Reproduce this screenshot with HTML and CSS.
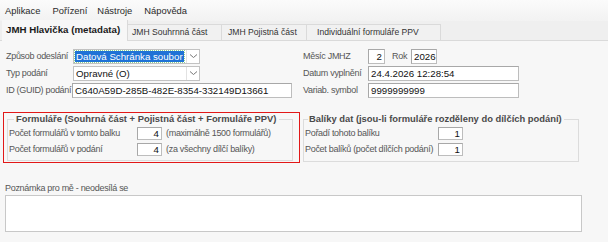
FILE: index.html
```html
<!DOCTYPE html>
<html lang="cs">
<head>
<meta charset="utf-8">
<title>JMH Hlavička</title>
<link rel="stylesheet" href="styles.css">
</head>
<body>
<div class="app">
  <div class="menubar">
    <span class="menu m1">Aplikace</span>
    <span class="menu m2">Pořízení</span>
    <span class="menu m3">Nástroje</span>
    <span class="menu m4">Nápověda</span>
  </div>
  <div class="tabs">
    <div class="tab active t1">JMH Hlavička (metadata)</div>
    <div class="tab t2">JMH Souhrnná část</div>
    <div class="tab t3">JMH Pojistná část</div>
    <div class="tab t4">Individuální formuláře PPV</div>
  </div>
  <div class="content">
    <div class="top">
      <div class="col left">
        <div class="row">
          <span class="lbl lw-left">Způsob odeslání</span>
          <div class="select">
            <span class="sel-text focused">Datová Schránka soubor</span>
            <span class="arrow"><svg width="9" height="6" viewBox="0 0 9 6"><path d="M1 1.5 L4.5 4.5 L8 1.5" fill="none" stroke="#777" stroke-width="1"/></svg></span>
          </div>
        </div>
        <div class="row">
          <span class="lbl lw-left">Typ podání</span>
          <div class="select">
            <span class="sel-text">Opravné (O)</span>
            <span class="arrow"><svg width="9" height="6" viewBox="0 0 9 6"><path d="M1 1.5 L4.5 4.5 L8 1.5" fill="none" stroke="#777" stroke-width="1"/></svg></span>
          </div>
        </div>
        <div class="row">
          <span class="lbl lw-left lw-id">ID (GUID) podání</span>
          <div class="input w-guid">C640A59D-285B-482E-8354-332149D13661</div>
        </div>
      </div>
      <div class="col right">
        <div class="row">
          <span class="lbl lw-right">Měsíc JMHZ</span>
          <div class="input num w-month">2</div>
          <span class="lbl rok">Rok</span>
          <div class="input w-year">2026</div>
        </div>
        <div class="row">
          <span class="lbl lw-right">Datum vyplnění</span>
          <div class="input w-date">24.4.2026 12:28:54</div>
        </div>
        <div class="row">
          <span class="lbl lw-right">Variab. symbol</span>
          <div class="input w-date">9999999999</div>
        </div>
      </div>
    </div>

    <div class="groups">
      <div class="redbox">
        <fieldset class="group g-left">
          <legend>Formuláře (Souhrná část + Pojistná část + Formuláře PPV)</legend>
          <div class="frow">
            <span class="lbl lw-g1">Počet formulářů v tomto balku</span>
            <div class="input small num">4</div>
            <span class="lbl hint">(maximálně 1500 formulářů)</span>
          </div>
          <div class="frow">
            <span class="lbl lw-g1">Počet formulářů v podání</span>
            <div class="input small num">4</div>
            <span class="lbl hint">(za všechny dílčí balíky)</span>
          </div>
        </fieldset>
      </div>
      <fieldset class="group g-right">
        <legend>Balíky dat (jsou-li formuláře rozděleny do dílčích podání)</legend>
        <div class="frow">
          <span class="lbl lw-g2">Pořadí tohoto balíku</span>
          <div class="input small num">1</div>
        </div>
        <div class="frow">
          <span class="lbl lw-g2">Počet balíků (počet dílčích podání)</span>
          <div class="input small num">1</div>
        </div>
      </fieldset>
    </div>

    <div class="note">
      <div class="lbl note-lbl">Poznámka pro mě - neodesílá se</div>
      <div class="textarea"></div>
    </div>
  </div>
</div>
</body>
</html>
```

FILE: styles.css
```css
html, body {
  margin: 0;
  padding: 0;
}
body {
  width: 608px;
  height: 242px;
  overflow: hidden;
  background: #f7f7f7;
  font-family: "Liberation Sans", Arial, sans-serif;
  color: #222;
}
.app {
  display: flex;
  flex-direction: column;
}

/* menu */
.menubar {
  height: 21px;
  display: flex;
  align-items: center;
  background: linear-gradient(#fbfbfb, #f2f2f2);
  font-size: 9.4px;
  color: #2a2a2a;
}
.menu { line-height: 12px; }
.m1 { margin-left: 5px; }
.m2 { margin-left: 12px; }
.m3 { margin-left: 10px; }
.m4 { margin-left: 12px; }

/* tabs */
.tabs {
  height: 20px;
  display: flex;
  align-items: flex-end;
  padding-left: 2px;
  background: #efefef;
  border-bottom: 1px solid #dadada;
  box-sizing: border-box;
}
.tab {
  box-sizing: border-box;
  height: 16px;
  line-height: 15px;
  font-size: 8.6px;
  color: #333;
  background: #f1f1f1;
  border: 1px solid #dadada;
  border-bottom: none;
  border-left: none;
  white-space: nowrap;
}
.tab.active {
  line-height: 19px;
  font-size: 9.7px;
  font-weight: bold;
  color: #1a1a1a;
  background: #f7f7f7;
  border-top: none;
  margin-bottom: -1px;
  height: 21px;
}
.t1 { width: 126px; padding-left: 4px; }
.t2 { width: 94px; padding-left: 4px; }
.t3 { width: 85px; padding-left: 6px; }
.t4 { width: 134px; padding-left: 10px; }

/* top form */
.content {
  display: flex;
  flex-direction: column;
}
.top {
  display: flex;
  padding-top: 7px;
}
.col {
  display: flex;
  flex-direction: column;
  gap: 1px;
}
.left { width: 297px; padding-left: 6px; box-sizing: border-box; }
.right { padding-left: 6px; }
.row {
  height: 16px;
  display: flex;
  align-items: center;
}
.lbl {
  font-size: 9px;
  letter-spacing: -0.3px;
  color: #565656;
  white-space: nowrap;
}
.lw-left { width: 67px; flex: none; }
.lw-id { width: 66px; }
.lw-right { width: 65px; flex: none; }
.rok { margin-left: 7px; width: 19px; }

.select {
  box-sizing: border-box;
  width: 127px;
  height: 15px;
  display: flex;
  align-items: center;
  background: #fff;
  border: 1px solid #c2c2c2;
  padding-left: 1px;
}
.sel-text {
  flex: 1;
  height: 11px;
  line-height: 11px;
  font-size: 9.7px;
  color: #111;
  padding-left: 1px;
  white-space: nowrap;
  overflow: hidden;
}
.sel-text.focused {
  flex: none;
  background: #1f72d6;
  color: #fff;
  outline: 1px dotted #8fd08f;
  padding-right: 1px;
}
.arrow {
  margin-left: auto;
  width: 13px;
  height: 13px;
  box-sizing: border-box;
  border-left: 1px solid #e2e2e2;
  display: flex;
  align-items: center;
  justify-content: center;
}

.input {
  box-sizing: border-box;
  height: 15px;
  line-height: 13px;
  background: #fff;
  border: 1px solid #bdbdbd;
  border-top-color: #a8a8a8;
  border-left-color: #a8a8a8;
  font-size: 9.7px;
  color: #111;
  padding: 0 2px;
  white-space: nowrap;
  overflow: hidden;
}
.num { text-align: right; }
.w-guid { width: 220px; }
.w-month { width: 17px; }
.w-year { width: 26px; }
.w-date { width: 151px; }

/* groups */
.groups {
  display: flex;
  margin-top: 14px;
  padding-left: 3px;
  gap: 3px;
}
.redbox {
  border: 1px solid #e21818;
  padding: 0 6px 1px 3px;
}
.group {
  margin: 0;
  padding: 0 0 3px 1px;
  border: 1px solid #dcdcdc;
  display: flex;
  flex-direction: column;
  box-sizing: border-box;
}
.group legend {
  padding: 0 2px;
  margin-left: 5px;
  font-size: 9.4px;
  font-weight: bold;
  line-height: 12px;
  color: #4a4a4a;
  white-space: nowrap;
}
.g-right legend { margin-left: 3px; padding: 0 2px 0 1px; }
.g-left { width: 286px; }
.g-right { width: 276px; margin-top: 1px; height: 49px; }
.frow {
  height: 16px;
  display: flex;
  align-items: center;
}
.lw-g1 { width: 128px; flex: none; }
.lw-g2 { width: 133px; flex: none; }
.input.small {
  width: 25px;
  height: 13px;
  line-height: 11px;
}
.hint { margin-left: 4px; }

/* note */
.note {
  display: flex;
  flex-direction: column;
  padding-left: 5px;
  margin-top: 19px;
}
.note-lbl {
  line-height: 12px;
  height: 12px;
}
.textarea {
  margin-top: 1px;
  width: 577px;
  height: 37px;
  box-sizing: border-box;
  background: #fff;
  border: 1px solid #c8c8c8;
}
```
